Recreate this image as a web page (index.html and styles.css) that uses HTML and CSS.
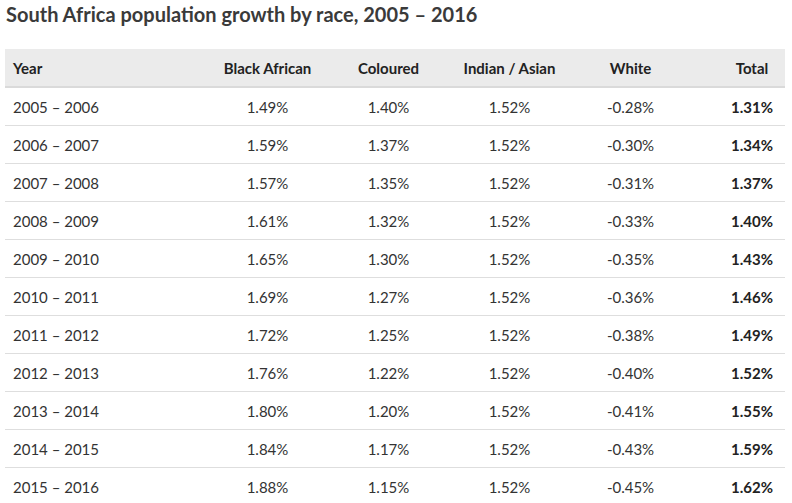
FILE: index.html
```html
<!DOCTYPE html>
<html>
<head>
<meta charset="utf-8">
<link rel="stylesheet" href="styles.css">
</head>
<body>
<h1 class="title">South Africa population growth by race, 2005 – 2016</h1>
<table class="data">
<colgroup>
<col class="c-year"><col class="c-num"><col class="c-num"><col class="c-num"><col class="c-num"><col class="c-total">
</colgroup>
<thead>
<tr><th class="year">Year</th><th>Black African</th><th>Coloured</th><th>Indian / Asian</th><th>White</th><th class="total">Total</th></tr>
</thead>
<tbody>
<tr><td class="year">2005 – 2006</td><td>1.49%</td><td>1.40%</td><td>1.52%</td><td>-0.28%</td><td class="total">1.31%</td></tr>
<tr><td class="year">2006 – 2007</td><td>1.59%</td><td>1.37%</td><td>1.52%</td><td>-0.30%</td><td class="total">1.34%</td></tr>
<tr><td class="year">2007 – 2008</td><td>1.57%</td><td>1.35%</td><td>1.52%</td><td>-0.31%</td><td class="total">1.37%</td></tr>
<tr><td class="year">2008 – 2009</td><td>1.61%</td><td>1.32%</td><td>1.52%</td><td>-0.33%</td><td class="total">1.40%</td></tr>
<tr><td class="year">2009 – 2010</td><td>1.65%</td><td>1.30%</td><td>1.52%</td><td>-0.35%</td><td class="total">1.43%</td></tr>
<tr><td class="year">2010 – 2011</td><td>1.69%</td><td>1.27%</td><td>1.52%</td><td>-0.36%</td><td class="total">1.46%</td></tr>
<tr><td class="year">2011 – 2012</td><td>1.72%</td><td>1.25%</td><td>1.52%</td><td>-0.38%</td><td class="total">1.49%</td></tr>
<tr><td class="year">2012 – 2013</td><td>1.76%</td><td>1.22%</td><td>1.52%</td><td>-0.40%</td><td class="total">1.52%</td></tr>
<tr><td class="year">2013 – 2014</td><td>1.80%</td><td>1.20%</td><td>1.52%</td><td>-0.41%</td><td class="total">1.55%</td></tr>
<tr><td class="year">2014 – 2015</td><td>1.84%</td><td>1.17%</td><td>1.52%</td><td>-0.43%</td><td class="total">1.59%</td></tr>
<tr><td class="year">2015 – 2016</td><td>1.88%</td><td>1.15%</td><td>1.52%</td><td>-0.45%</td><td class="total">1.62%</td></tr>
</tbody>
</table>
</body>
</html>
```
FILE: styles.css
```css
html, body {
  margin: 0;
  padding: 0;
  background: #fff;
}
body {
  font-family: Lato, "Open Sans", sans-serif;
  color: #333;
  padding: 0 7px 0 5px;
}
.title {
  margin: 0;
  padding: 3px 0 0 1px;
  height: 49px;
  box-sizing: border-box;
  font-size: 20px;
  font-weight: 700;
  line-height: 22px;
  color: #3a3a3a;
}
.data {
  width: 780px;
  border-collapse: collapse;
  table-layout: fixed;
  font-size: 15px;
}
.c-year { width: 202px; }
.c-num { width: 121px; }
.c-total { width: 94px; }
.data th {
  height: 37px;
  padding: 0;
  background: #ebebeb;
  border-bottom: 2px solid #dadada;
  font-weight: 700;
  color: #222;
  text-align: center;
  vertical-align: middle;
}
.data td {
  height: 37px;
  padding: 0;
  border-bottom: 1px solid #dedede;
  text-align: center;
  vertical-align: middle;
}
.data .year {
  text-align: left;
  padding-left: 8px;
}
.data .total {
  padding-left: 28px;
}
.data td.total {
  font-weight: 700;
  color: #222;
}
```
